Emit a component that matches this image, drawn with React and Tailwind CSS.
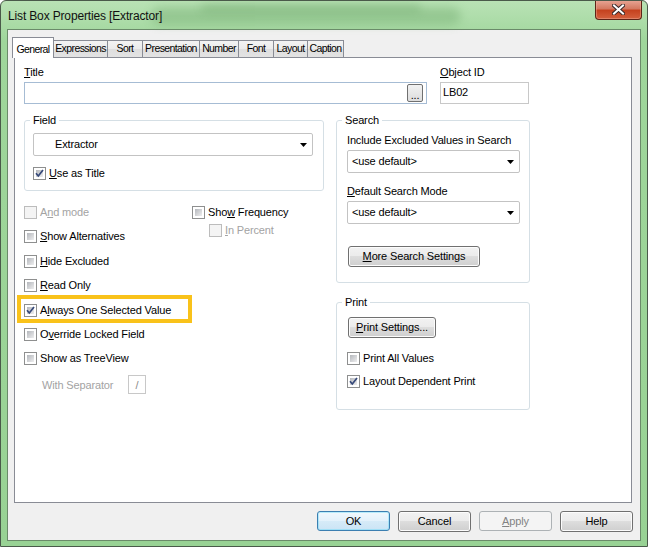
import React from 'react'

const font = "font-['Liberation_Sans',Arial,sans-serif]"

function Check({ checked, disabled }) {
  if (disabled) {
    return <span className="block w-[13px] h-[13px] shrink-0 border border-[#bcbcbc] bg-[#f4f4f4]" />
  }
  return (
    <span className="relative block w-[13px] h-[13px] shrink-0 border border-[#8e8f8f] bg-white p-[2px]">
      <span className="block w-full h-full bg-[linear-gradient(135deg,#b4b7bc,#eeeeef)]" />
      {checked && (
        <svg className="absolute left-0 top-0" width="11" height="11" viewBox="0 0 11 11">
          <path d="M2 5.2 L4.3 8 L9 2" fill="none" stroke="#36497a" strokeWidth="1.7" />
        </svg>
      )}
    </span>
  )
}

function CheckRow({ checked, disabled, children }) {
  return (
    <div className="flex items-center gap-[3px] h-[13px]">
      <Check checked={checked} disabled={disabled} />
      <span className={disabled ? 'leading-[13px] text-[#a3a3a3]' : 'leading-[13px]'}>{children}</span>
    </div>
  )
}

function Arrow() {
  return (
    <svg width="7" height="4" viewBox="0 0 7 4" className="shrink-0">
      <polygon points="0,0 7,0 3.5,4" fill="#000" />
    </svg>
  )
}

function Dropdown({ text, indent }) {
  return (
    <div className={`h-[23px] border border-[#c3c3c3] rounded-[2px] bg-white flex items-center pr-[5px] ${indent ? 'pl-[21px]' : 'pl-[4px]'}`}>
      <span className="flex-1 leading-[13px]">{text}</span>
      <Arrow />
    </div>
  )
}

function Btn({ children, w, kind }) {
  if (kind === 'default') {
    return (
      <div className={`${w} h-[20px] rounded-[3px] border border-[#3c7fb1] bg-[linear-gradient(#f1f8fd,#e3f1fb_50%,#d6ebf8_50%,#cbe4f5)] shadow-[inset_0_0_0_1px_#48d4fa55] flex items-center justify-center`}>
        {children}
      </div>
    )
  }
  if (kind === 'disabled') {
    return (
      <div className={`${w} h-[20px] rounded-[3px] border border-[#adb2b5] bg-[#f4f4f4] text-[#838383] flex items-center justify-center`}>
        {children}
      </div>
    )
  }
  return (
    <div className={`${w} h-[21px] rounded-[3px] border border-[#707070] bg-[linear-gradient(#f2f2f2,#ebebeb_50%,#dddddd_50%,#cfcfcf)] shadow-[inset_0_0_0_1px_#fcfcfc] flex items-center justify-center`}>
      {children}
    </div>
  )
}

function Group({ title, children, className }) {
  return (
    <fieldset className={`border border-[#d5dfe5] rounded-[3px] ${className || ''}`}>
      <legend className="ml-[5px] px-[3px] h-[13px] leading-[13px]">{title}</legend>
      {children}
    </fieldset>
  )
}

const tabs = [
  ['Expressions', 'w-[55px]'],
  ['Sort', 'w-[36px]'],
  ['Presentation', 'w-[58px]'],
  ['Number', 'w-[40px]'],
  ['Font', 'w-[36px]'],
  ['Layout', 'w-[35px]'],
  ['Caption', 'w-[37px]'],
]

export default function App() {
  return (
    <div className={`${font} text-[11px] tracking-[-0.15px] text-black w-[648px] h-[547px] flex flex-col border border-[#4a5a4a] rounded-t-[6px] bg-[linear-gradient(#b9e2b5,#9fd69b_40px,#98d294)] overflow-hidden`}>
      {/* title bar */}
      <div className="relative h-[28px] flex items-start shrink-0">
        <div className="absolute left-[150px] top-[6px] w-[310px] h-[18px] bg-[#6fa86c] opacity-40 blur-[5px] rounded-full" />
        <div className="absolute left-[200px] top-[3px] w-[220px] h-[8px] bg-[#5e9a5b] opacity-30 blur-[4px] rounded-full" />
        <span className="relative pl-[7px] pt-[8px] text-[12px] leading-[14px] text-[#111]">List Box Properties [Extractor]</span>
        <div className="relative ml-auto mr-[5px] -mt-px w-[47px] h-[20px] rounded-b-[4px] border border-[#5d2417] border-t-0 bg-[linear-gradient(#e9a797,#d47a62_45%,#c5421f_55%,#d4603e)] shadow-[inset_0_0_0_1px_#f3b9a566] flex items-center justify-center">
          <svg width="13" height="11" viewBox="0 0 13 11">
            <path d="M2 1.5 L11 9.5 M11 1.5 L2 9.5" stroke="#3b2a2a" strokeWidth="4" strokeLinecap="square" />
            <path d="M2 1.5 L11 9.5 M11 1.5 L2 9.5" stroke="#fff" strokeWidth="2" strokeLinecap="square" />
          </svg>
        </div>
      </div>

      {/* client area */}
      <div className="mx-[6px] mb-[6px] flex-1 bg-[#f0f0f0] border border-[#6a8a69] flex flex-col pl-[6px] pr-[7px] pt-[7px] pb-[8px]">
        {/* tabs */}
        <div className="flex items-end h-[20px] -ml-[2px] text-[10.5px] tracking-[-0.6px]">
          <div className="relative z-10 w-[42px] h-[21px] -mb-px bg-white border border-b-0 border-[#898c95] flex items-start justify-center pt-[4px]">
            General
          </div>
          {tabs.map(([t, w]) => (
            <div key={t} className={`${w} -ml-px h-[17px] border border-b-0 border-[#898c95] bg-[linear-gradient(#f3f3f3,#ebebeb_50%,#dedede_50%,#e3e3e3)] flex items-center justify-center whitespace-nowrap overflow-hidden`}>
              {t}
            </div>
          ))}
        </div>

        {/* page */}
        <div className="w-[618px] h-[446px] bg-white border border-[#898c95] pl-[9px] pt-[8px]">
          {/* title / object id */}
          <div className="flex gap-[13px]">
            <div className="w-[403px]">
              <div className="h-[13px] leading-[13px]"><u>T</u>itle</div>
              <div className="mt-[3px] h-[22px] border border-[#a6bcd4] bg-white flex items-center justify-end pr-[3px]">
                <div className="w-[16px] h-[18px] rounded-[2px] border border-[#707070] bg-[linear-gradient(#f2f2f2,#dddddd)] flex items-end justify-center pb-[3px] leading-[6px]">...</div>
              </div>
            </div>
            <div className="w-[89px]">
              <div className="h-[13px] leading-[13px]"><u>O</u>bject ID</div>
              <div className="mt-[3px] h-[22px] border border-[#c8c8c8] bg-white pl-[2px] pt-[3px] leading-[13px]">LB02</div>
            </div>
          </div>

          <div className="mt-[10px] flex gap-[12px]">
            {/* left column */}
            <div className="w-[300px]">
              <Group title="Field">
                <div className="pl-[8px] pr-[10px] pt-[6px] pb-[10px]">
                  <Dropdown text="Extractor" indent />
                  <div className="mt-[11px]">
                    <CheckRow checked><u>U</u>se as Title</CheckRow>
                  </div>
                </div>
              </Group>

              <div className="mt-[15px] flex">
                <div className="w-[168px] flex flex-col gap-[11.4px]">
                  <CheckRow disabled>A<u>n</u>d mode</CheckRow>
                  <CheckRow><u>S</u>how Alternatives</CheckRow>
                  <CheckRow><u>H</u>ide Excluded</CheckRow>
                  <CheckRow><u>R</u>ead Only</CheckRow>
                  <div className="relative">
                    <div className="absolute -left-[7px] -top-[9px] w-[175px] h-[28px] border-[4px] border-[#f9c21a]" />
                    <CheckRow checked>A<u>l</u>ways One Selected Value</CheckRow>
                  </div>
                  <CheckRow>O<u>v</u>erride Locked Field</CheckRow>
                  <CheckRow>Show as TreeView</CheckRow>
                </div>
                <div className="flex flex-col">
                  <CheckRow>Sho<u>w</u> Frequency</CheckRow>
                  <div className="mt-[5px] ml-[17px]">
                    <CheckRow disabled><u>I</u>n Percent</CheckRow>
                  </div>
                </div>
              </div>

              <div className="mt-[10px] flex items-center pl-[18px]">
                <span className="w-[86px] text-[#a3a3a3]">With Separator</span>
                <div className="w-[18px] h-[19px] border border-[#c8c8c8] bg-white flex items-center justify-center text-[#8a8a8a]">/</div>
              </div>
            </div>

            {/* right column */}
            <div className="w-[194px]">
              <Group title="Search">
                <div className="pl-[10px] pr-[9px] pt-[7px] pb-[15px]">
                  <div className="h-[13px] leading-[13px]">Include Excluded Values in Search</div>
                  <div className="mt-[3px]"><Dropdown text="<use default>" /></div>
                  <div className="mt-[12px] h-[13px] leading-[13px]"><u>D</u>efault Search Mode</div>
                  <div className="mt-[3px]"><Dropdown text="<use default>" /></div>
                  <div className="mt-[22px] ml-[1px]">
                    <Btn w="w-[132px]"><span><u>M</u>ore Search Settings</span></Btn>
                  </div>
                </div>
              </Group>

              <Group title="Print" className="mt-[13px]">
                <div className="pl-[10px] pt-[8px] pb-[21px]">
                  <div className="ml-[1px]">
                    <Btn w="w-[88px]"><span><u>P</u>rint Settings...</span></Btn>
                  </div>
                  <div className="mt-[14px]"><CheckRow>Print All Values</CheckRow></div>
                  <div className="mt-[10px]"><CheckRow checked>Layout Dependent Print</CheckRow></div>
                </div>
              </Group>
            </div>
          </div>
        </div>

        {/* dialog buttons */}
        <div className="mt-[8px] flex justify-end gap-[8px]">
          <Btn w="w-[73px]" kind="default">OK</Btn>
          <Btn w="w-[73px]">Cancel</Btn>
          <Btn w="w-[73px]" kind="disabled"><span><u>A</u>pply</span></Btn>
          <Btn w="w-[73px]">Help</Btn>
        </div>
      </div>
    </div>
  )
}
